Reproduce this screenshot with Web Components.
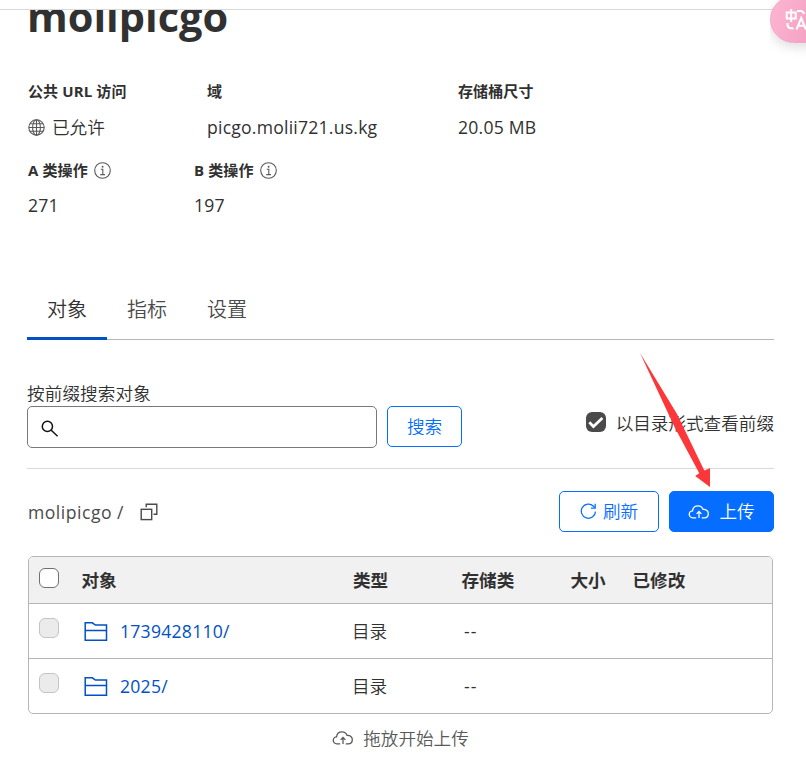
<!DOCTYPE html>
<html lang="zh-CN">
<head>
<meta charset="utf-8">
<title>molipicgo</title>
<style>
html,body{margin:0;height:762px;overflow:hidden;background:#fff}
body{font-family:"Open Sans","Noto Sans CJK SC",sans-serif;font-size:17.6px;color:#313131}
bucket-page{--cjk-weight:350}
</style>
</head>
<body>
<bucket-page></bucket-page>
<script>
const define = (name, html, setup) => {
  const template = document.createElement('template');
  template.innerHTML = html;
  customElements.define(name, class extends HTMLElement {
    constructor() {
      super();
      this.attachShadow({ mode: 'open' }).append(template.content.cloneNode(true));
    }
    connectedCallback() { if (setup) setup(this, this.shadowRoot); }
  });
};

const icons = {
  globe: [17, 17, '<g fill="none" stroke="currentColor" stroke-width="1.1"><circle cx="8.5" cy="8.5" r="7.7"/><ellipse cx="8.5" cy="8.5" rx="3.9" ry="7.7"/><path d="M8.5 .8v15.4M.8 8.5h15.4M2 4.7h13M2 12.3h13"/></g>'],
  info: [17, 17, '<g fill="none" stroke="currentColor" stroke-width="1.1"><circle cx="8.5" cy="8.5" r="7.8"/><path d="M6.8 7.3h2v5.2M6.2 12.6h4.8"/></g><circle cx="8.6" cy="4.7" r=".95" fill="currentColor"/>'],
  search: [18, 18, '<g fill="none" stroke="#111" stroke-width="1.5"><circle cx="6.4" cy="6.4" r="5.1"/><path d="M10 10l6.6 6.2"/></g>'],
  refresh: [17, 17, '<g fill="none" stroke="currentColor" stroke-width="1.25"><path d="M15.5 8.6a7.1 7.1 0 1 1-2-5.4l1.2 1.5"/><path d="M15.2.8v4.2h-4.2"/></g>'],
  cloud: [22, 16, '<g fill="none" stroke="currentColor" stroke-width="1.3"><path d="M8.2 13.8H4.900a3.500 3.500 0 0 1-.3-7c.3-3 2.600-4.900 5.400-4.900 2.600 0 4.200 1.200 5.100 3.500 3.200-.2 5.200 1.600 5.200 4.300 0 2.500-1.700 4.100-4.100 4.100h-2.500"/><path d="M11 14V7.500M8.600 9.900L11 7.500l2.400 2.400"/></g>'],
  copy: [18, 18, '<g fill="none" stroke="currentColor" stroke-width="1.4"><rect x="1.200" y="6.300" width="10.500" height="10.300"/><path d="M6.200 4.200V1.200h10.600v10.100h-3.300"/></g>'],
  folder: [24, 21, '<g fill="none" stroke="currentColor" stroke-width="1.5"><path d="M1.200 19.200V1.800h7.100l3.100 2.300h11.100v15.100zM1.200 9.500h21.300"/></g>'],
  check: [20, 20, '<path d="M3.300 10.300l4.100 4.200 9-8.600" fill="none" stroke="#fff" stroke-width="2.700"/>']
};

define('ui-icon', `<style>:host{display:block;flex:none}svg{display:block}</style><svg></svg>`, (el, root) => {
  const [w, h, body] = icons[el.getAttribute('name')];
  const svg = root.querySelector('svg');
  svg.setAttribute('width', w);
  svg.setAttribute('height', h);
  svg.setAttribute('viewBox', `0 0 ${w} ${h}`);
  svg.innerHTML = body;
});

define('stat-item', `
<style>
:host{display:block;white-space:nowrap}
.label{display:flex;align-items:center;gap:6px;height:20px;font-size:15px;letter-spacing:.12px;font-weight:700;line-height:20px;color:#313131}
.value{display:flex;align-items:center;gap:7px;height:24px;line-height:24px;margin-top:var(--stat-gap,14px)}
::slotted(ui-icon){color:#595959}
</style>
<div class="label"><slot name="label"></slot></div>
<div class="value"><slot></slot></div>`);

define('tab-item', `
<style>
:host{display:block;box-sizing:border-box;height:59px;padding:0 20px;line-height:58px;font-size:20px;font-weight:var(--cjk-weight);color:#4a4a4a}
:host([active]){color:#313131;border-bottom:3px solid #0051c3}
</style><slot></slot>`);

define('tab-bar', `
<style>
:host{display:flex;height:59px;background:linear-gradient(#b6b6b6,#b6b6b6) 0 58px/100% 1px no-repeat}
</style><slot></slot>`);

define('ui-button', `
<style>
:host{display:flex;box-sizing:border-box;align-items:center;justify-content:center;gap:var(--gap,6px);height:41px;border:1px solid #056dff;border-radius:5px;color:#056dff;background:#fff;line-height:39px;font-weight:var(--cjk-weight);white-space:nowrap}
:host([primary]){color:#fff;background:#056dff}
</style><slot></slot>`);

define('check-box', `
<style>
:host{display:block;box-sizing:border-box;flex:none;width:20px;height:20px;border:1px solid #707070;border-radius:6px;background:#fff}
:host([disabled]){border-color:#c4c4c4;background:#ebebeb}
:host([checked]){border:0;background:#4a4a4a}
ui-icon{display:none}
:host([checked]) ui-icon{display:block}
</style><ui-icon name="check"></ui-icon>`);

define('object-row', `
<style>
:host{display:grid;grid-template-columns:53px 271px 109px 109px 62px 1fr;box-sizing:border-box;height:55px;border-top:1px solid #b6b6b6;align-items:center;line-height:26px}
:host([head]){grid-template-columns:52.5px 271.5px 108.500px 109px 62px 1fr;height:46px;border:0;background:#f1f1f1;font-weight:700}
</style><slot></slot>`);

define('object-table', `
<style>
:host{display:block;box-sizing:border-box;border:1px solid #b6b6b6;border-radius:5px;overflow:hidden}
check-box{margin-left:10px;align-self:start;margin-top:14px}
[head] check-box{margin-top:11px}
.name{display:flex;align-items:center;gap:12px;color:#0051c3;padding-left:2px;letter-spacing:.25px}
.kind{font-weight:var(--cjk-weight);margin-left:-1px}
.none{padding-left:2px;letter-spacing:1.2px}
</style>
<object-row head><check-box></check-box><span>对象</span><span>类型</span><span>存储类</span><span>大小</span><span>已修改</span></object-row>
<object-row><check-box disabled></check-box><span class="name"><ui-icon name="folder"></ui-icon>1739428110/</span><span class="kind">目录</span><span class="none">--</span></object-row>
<object-row><check-box disabled></check-box><span class="name"><ui-icon name="folder"></ui-icon>2025/</span><span class="kind">目录</span><span class="none">--</span></object-row>`);

define('search-field', `
<style>
:host{display:flex;box-sizing:border-box;width:350px;height:42px;align-items:center;padding-left:13px;padding-top:3px;border:1px solid #797979;border-radius:5px;background:#fff}
</style><ui-icon name="search"></ui-icon>`);

define('translate-badge', `
<style>
:host{display:block;position:absolute;left:770px;top:-4px;width:36px;height:70px;overflow:hidden}
.pill{box-sizing:border-box;width:64px;height:47px;border-radius:24px;background:linear-gradient(110deg,#fbb6d2,#f398bd);box-shadow:0 4px 12px #0002;border:1px solid #f6a5c6}
svg{display:block}
</style>
<div class="pill"><svg width="36" height="46" viewBox="0 0 36 46"><g fill="none" stroke="#fff" stroke-width="2"><path d="M15.700 15.500h9v6h-9zM20.200 12v13M26 14h3.500q3 0 3.500 3M16.500 26v2q0 3.500 6 3.500M25.500 32.500l4.700-11.500 4.700 11.500M27 28.800h6.500"/></g></svg></div>`);

define('pointer-arrow', `
<style>:host{display:block;position:absolute;left:638px;top:351px;width:76px;height:140px}svg{display:block}</style>
<svg width="76" height="140" viewBox="638 351 76 140"><path d="M640 353L677 414 704.300 470.500 710 468.300V487L695.200 476 699.300 473.300 674.500 427Z" fill="#fc3639"/></svg>`);

define('bucket-page', `
<style>
:host{display:block;position:relative;width:806px;height:762px;overflow:hidden}
.topbar{height:9px;border-bottom:1px solid #d9d9d9}
.title{height:71px;overflow:hidden}
h1{margin:-22px 0 0 27px;font-size:41.5px;line-height:56px;font-weight:700;white-space:nowrap}
main{display:flex;flex-direction:column;padding:0 32px 0 27px}
.stats{display:grid;padding-left:1px}
.first{grid-template-columns:179px 251px 1fr;height:79px}
.second{grid-template-columns:166px 1fr;height:121px;--stat-gap:13px}
.latin{letter-spacing:.22px}
.cjk{font-weight:var(--cjk-weight)}
.label{height:24px;line-height:24px;margin-top:41px;margin-bottom:1px;font-weight:var(--cjk-weight);letter-spacing:.1px}
.search{display:flex;gap:10px;height:62px;border-bottom:1px solid #d9d9d9}
.search ui-button{width:75px}
.toggle{display:flex;align-items:center;gap:10px;height:32px;margin-left:auto;font-weight:var(--cjk-weight)}
.actions{display:flex;gap:10px;margin-top:22px;height:65px}
.crumb{display:flex;align-items:center;gap:16px;height:41px;margin-right:auto;padding-left:1px;color:#4a4a4a}
.crumb span{letter-spacing:.5px}
.refresh{width:100px}
.upload{width:105px;--gap:9px}
object-table{margin:0 1px}
.hint{display:flex;align-items:center;justify-content:center;gap:9px;height:47px;color:#595959;font-weight:var(--cjk-weight)}
</style>
<div class="topbar"></div>
<div class="title"><h1>molipicgo</h1></div>
<main>
  <div class="stats first">
    <stat-item><span slot="label">公共 URL 访问</span><ui-icon name="globe"></ui-icon><span class="cjk">已允许</span></stat-item>
    <stat-item><span slot="label">域</span><span class="latin">picgo.molii721.us.kg</span></stat-item>
    <stat-item><span slot="label">存储桶尺寸</span><span class="latin">20.05 MB</span></stat-item>
  </div>
  <div class="stats second">
    <stat-item><span slot="label">A 类操作</span><ui-icon slot="label" name="info"></ui-icon><span class="latin">271</span></stat-item>
    <stat-item><span slot="label">B 类操作</span><ui-icon slot="label" name="info"></ui-icon><span class="latin">197</span></stat-item>
  </div>
  <tab-bar><tab-item active>对象</tab-item><tab-item>指标</tab-item><tab-item>设置</tab-item></tab-bar>
  <div class="label">按前缀搜索对象</div>
  <div class="search">
    <search-field></search-field>
    <ui-button>搜索</ui-button>
    <div class="toggle"><check-box checked></check-box><span>以目录形式查看前缀</span></div>
  </div>
  <div class="actions">
    <div class="crumb"><span>molipicgo /</span><ui-icon name="copy"></ui-icon></div>
    <ui-button class="refresh"><ui-icon name="refresh"></ui-icon><span>刷新</span></ui-button>
    <ui-button class="upload" primary><ui-icon name="cloud"></ui-icon><span>上传</span></ui-button>
  </div>
  <object-table></object-table>
  <div class="hint"><ui-icon name="cloud"></ui-icon><span>拖放开始上传</span></div>
</main>
<translate-badge></translate-badge>
<pointer-arrow></pointer-arrow>`);
</script>
</body>
</html>
